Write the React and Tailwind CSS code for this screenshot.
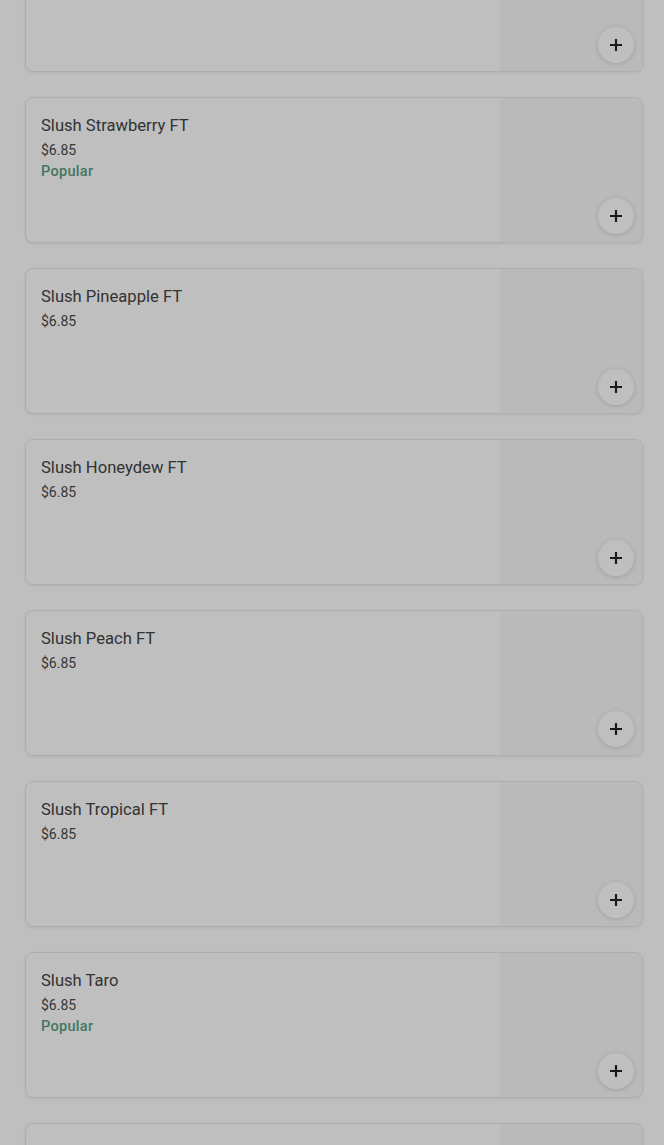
import React from "react";

const items = [
  { name: "", price: "", popular: false },
  { name: "Slush Strawberry FT", price: "$6.85", popular: true },
  { name: "Slush Pineapple FT", price: "$6.85", popular: false },
  { name: "Slush Honeydew FT", price: "$6.85", popular: false },
  { name: "Slush Peach FT", price: "$6.85", popular: false },
  { name: "Slush Tropical FT", price: "$6.85", popular: false },
  { name: "Slush Taro", price: "$6.85", popular: true },
  { name: "Slush Taro FT", price: "$6.85", popular: false },
];

function Plus() {
  return (
    <svg width="12" height="12" viewBox="0 0 12 12" fill="none">
      <path d="M6 1v10M1 6h10" stroke="#222" strokeWidth="2.2" strokeLinecap="square" />
    </svg>
  );
}

function Card({ item }) {
  return (
    <div className="relative flex h-[146px] rounded-lg border border-[#e8e8e8] bg-white shadow-[0_1px_3px_rgba(0,0,0,0.07)] overflow-hidden">
      <div className="flex-1 flex flex-col pl-[15px] pt-4">
        {item.name && (
          <div className="text-[16.6px] leading-6 text-[#444]">{item.name}</div>
        )}
        {item.price && (
          <div className="mt-[2px] text-[14px] leading-5 text-[#4a4a4a]">{item.price}</div>
        )}
        {item.popular && (
          <div className="mt-[2px] text-[14.5px] leading-5 font-medium tracking-[0.3px] text-[#5a9f80]">Popular</div>
        )}
      </div>
      <div className="w-[142px] h-full bg-[#f8f8f8]" />
      <button className="absolute bottom-[8px] right-[8px] w-9 h-9 rounded-full bg-white shadow-[0_1px_5px_rgba(0,0,0,0.14)] flex items-center justify-center">
        <Plus />
      </button>
    </div>
  );
}

export default function App() {
  return (
    <div className="relative w-[664px] h-[1145px] overflow-hidden bg-white" style={{ fontFamily: "Roboto, 'Noto Sans', sans-serif" }}>
      <div className="-mt-[74px] pl-[25px] pr-[21px] flex flex-col gap-[25px]">
        {items.map((it, i) => (
          <Card key={i} item={it} />
        ))}
      </div>
      <div className="absolute inset-0 bg-black/25" />
    </div>
  );
}
